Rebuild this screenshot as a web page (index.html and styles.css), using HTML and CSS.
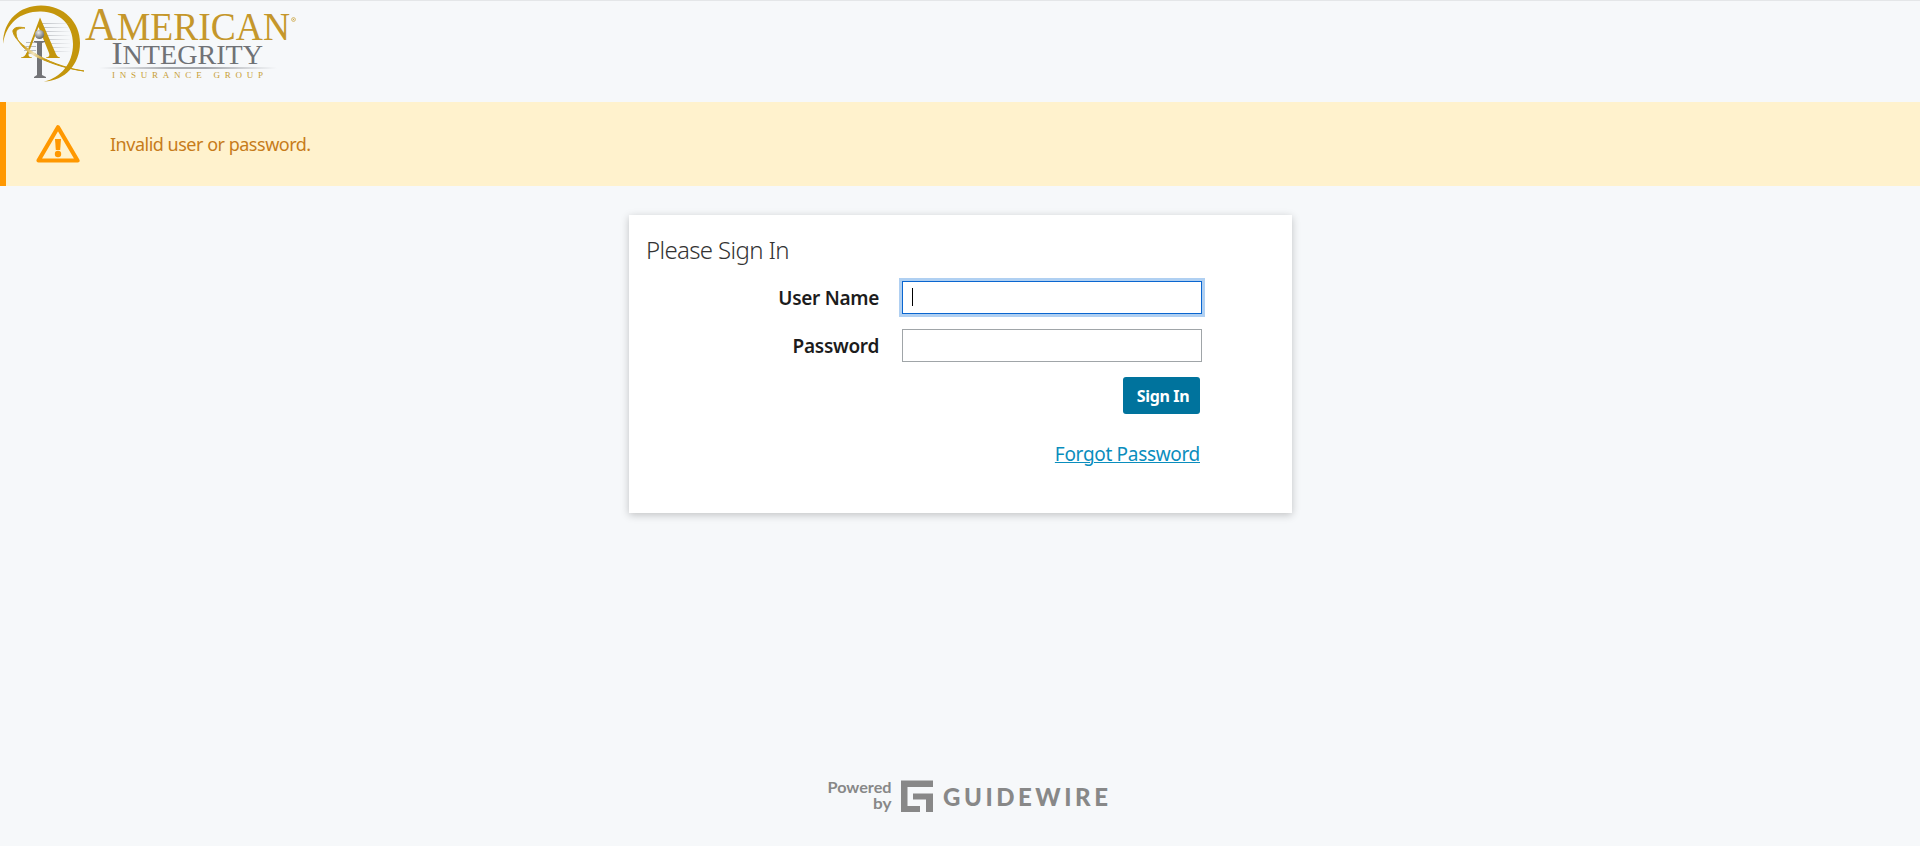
FILE: index.html
```html
<!DOCTYPE html>
<html lang="en">
<head>
<meta charset="utf-8">
<title>Sign In</title>
<link rel="stylesheet" href="styles.css">
</head>
<body>
<header class="header">
  <svg class="brand" width="320" height="101" viewBox="0 1 320 101" role="img" aria-label="American Integrity Insurance Group">
    <defs>
      <linearGradient id="rule"><stop offset="0" stop-color="#a4a7ac" stop-opacity="0"/><stop offset=".4" stop-color="#a4a7ac"/><stop offset=".6" stop-color="#a4a7ac"/><stop offset="1" stop-color="#a4a7ac" stop-opacity="0"/></linearGradient>
      <linearGradient id="speed" gradientUnits="userSpaceOnUse" x1="40" y1="0" x2="72" y2="0"><stop offset="0" stop-color="#b8bbc0"/><stop offset="1" stop-color="#b8bbc0" stop-opacity="0"/></linearGradient>
      <linearGradient id="sweep" gradientUnits="userSpaceOnUse" x1="13" y1="30" x2="84" y2="70"><stop offset="0" stop-color="#c4960c"/><stop offset=".22" stop-color="#c99c1c"/><stop offset=".36" stop-color="#f2e4bd"/><stop offset=".52" stop-color="#c4960c"/><stop offset="1" stop-color="#c4960c"/></linearGradient>
      <radialGradient id="ball" cx=".4" cy=".3" r=".7"><stop offset="0" stop-color="#e8e9ea"/><stop offset="1" stop-color="#66686b"/></radialGradient>
    </defs>
    <path d="M3 44C3 20 20 5.500 41 5.500C64 5.500 80 22 80 43C80 64 65 81 44 81.500C61 78 73 63 73 44C73 25 60 12 41 11.500C21 11 6 23 3 44Z" fill="#c4960c"/>
    <path d="M42 23.500H70M44 27.500H70M45 31.500H70M46 35.500H70M46 39.500H70M48 43.500H70M48 47.500H70M49 51.500H70M26 42.500H36M26 46.500H36M24 50.500H36M26 53.500H36" stroke="url(#speed)" fill="none"/>
    <path d="M40 17.500L55.500 53Q57 57 60 57.500V58H46V57.500Q50.500 57 49 53L38.500 27L29 52Q27 57 32 57.500V58H21V57.500Q25 57 27 52Z" fill="#c4960c"/>
    <path d="M34 41H45V42L42 43V75L46 77V78H34V77L37 75V43L34 42Z" fill="#737477"/>
    <circle cx="39.500" cy="34.500" r="4.600" fill="url(#ball)"/>
    <path d="M25 28C18 26 12 28 13 32C15 41 28 49 39 56C54 64 70 69 84 71C68 69 52 64 37 57C25 51 16 41 16 33C16 29 20 28 25 28Z" fill="url(#sweep)" stroke="url(#sweep)" stroke-width="1"/>
    <g class="brand-serif">
      <text x="85" y="40" font-size="39" fill="#c5972b" textLength="205" lengthAdjust="spacingAndGlyphs"><tspan font-size="46">A</tspan>MERICAN</text>
      <circle cx="293.500" cy="19.500" r="1.900" fill="none" stroke="#cda747" stroke-width=".8"/>
      <circle cx="293.500" cy="19.500" r=".7" fill="#cda747"/>
      <text x="111.500" y="63.500" font-size="27" fill="#707276" textLength="151.500" lengthAdjust="spacingAndGlyphs"><tspan font-size="32">I</tspan>NTEGRITY</text>
      <text x="112" y="78" font-size="9" fill="#c89e35" textLength="151">INSURANCE GROUP</text>
    </g>
    <rect x="99" y="67" width="178" height="2" fill="url(#rule)"/>
  </svg>
</header>
<div class="message" role="alert">
  <svg class="message-icon" width="44" height="40" viewBox="0 0 44 40"><path d="M22 3.200L41.500 36.500H2.500Z" fill="none" stroke="#ff9800" stroke-width="4.200" stroke-linejoin="round"/><path d="M19 15h6l-.8 11h-4.400z" fill="#ff9800"/><circle cx="22" cy="30" r="3.200" fill="#ff9800"/></svg>
  <span class="message-text">Invalid user or password.</span>
</div>
<main class="card">
  <h1 class="title">Please Sign In</h1>
  <form class="form">
    <label class="label" for="user">User Name</label>
    <div class="input focused" id="user"><span class="caret"></span></div>
    <label class="label" for="pass">Password</label>
    <div class="input" id="pass"></div>
  </form>
  <div class="actions">
    <button class="button" type="button">Sign In</button>
    <a class="link" href="#">Forgot Password</a>
  </div>
</main>
<footer class="footer">
  <svg width="290" height="40" viewBox="824 776 290 40" fill="#888">
    <g class="powered"><text x="827.500" y="793" textLength="64" lengthAdjust="spacingAndGlyphs">Powered</text><text x="873" y="809" textLength="18.500" lengthAdjust="spacingAndGlyphs">by</text></g>
    <path d="M901 780.500H933V787H907.500V806H920V812H901ZM913 793.500H933V812H926V799.500H913Z"/>
    <text class="guidewire" x="943" y="806" textLength="165">GUIDEWIRE</text>
  </svg>
</footer>
</body>
</html>
```
FILE: styles.css
```css
* { box-sizing: border-box; }
body {
  margin: 0;
  height: 846px;
  display: flex;
  flex-direction: column;
  overflow: hidden;
  background: #f6f8fa;
  color: #1c1c1c;
  font-family: "Noto Sans", "Open Sans", sans-serif;
}
.header { height: 102px; border-top: 1px solid #e4e6e8; }
.brand { display: block; }
.brand-serif { font-family: "Liberation Serif", serif; }
.message {
  height: 84px;
  display: flex;
  align-items: center;
  gap: 30px;
  padding-left: 30px;
  border-left: 6px solid #ff9800;
  background: #fff2cd;
}
.message-icon { display: block; }
.message-text { font-size: 18px; letter-spacing: -.49px; color: #c77c1a; }
.card {
  width: 663px;
  height: 298px;
  margin: 29px 0 0 629px;
  padding: 18px 92px 0 18px;
  background: #fff;
  box-shadow: 0 2px 8px rgba(0, 0, 0, .22);
}
.title {
  margin: 0 0 0 -1px;
  height: 48px;
  font-size: 24px;
  line-height: 34px;
  font-weight: 300;
  letter-spacing: -.65px;
  color: #333;
}
.form {
  display: grid;
  grid-template-columns: 232px 300px;
  grid-auto-rows: 33px;
  column-gap: 23px;
  row-gap: 15px;
}
.label {
  font-size: 19px;
  line-height: 34px;
  font-weight: 600;
  letter-spacing: -.3px;
  text-align: right;
}
.input {
  display: flex;
  align-items: center;
  padding-left: 9px;
  border: 1px solid #a0a5a8;
  background: #fff;
}
.focused { border-color: #0a66d0; box-shadow: 0 0 0 3px #b0d0f2; }
.caret { width: 1px; height: 18px; margin-bottom: 2px; background: #000; }
.actions {
  display: flex;
  flex-direction: column;
  align-items: flex-end;
  gap: 28px;
  padding-top: 15px;
}
.button {
  width: 77px;
  height: 37px;
  padding: 0 0 0 3px;
  border: 0;
  border-radius: 3px;
  background: #00739d;
  color: #fff;
  font: 700 16px "Noto Sans", sans-serif;
  letter-spacing: -.35px;
}
.link { font-size: 19px; line-height: 25px; letter-spacing: -.32px; color: #0a8dbd; text-underline-offset: 1px; text-decoration-thickness: 1px; }
.footer { margin: 263px 0 0 824px; }
.footer svg { display: block; }
.powered { font: 700 16px Lato, sans-serif; }
.guidewire { font: 900 24px Lato, sans-serif; }
```
